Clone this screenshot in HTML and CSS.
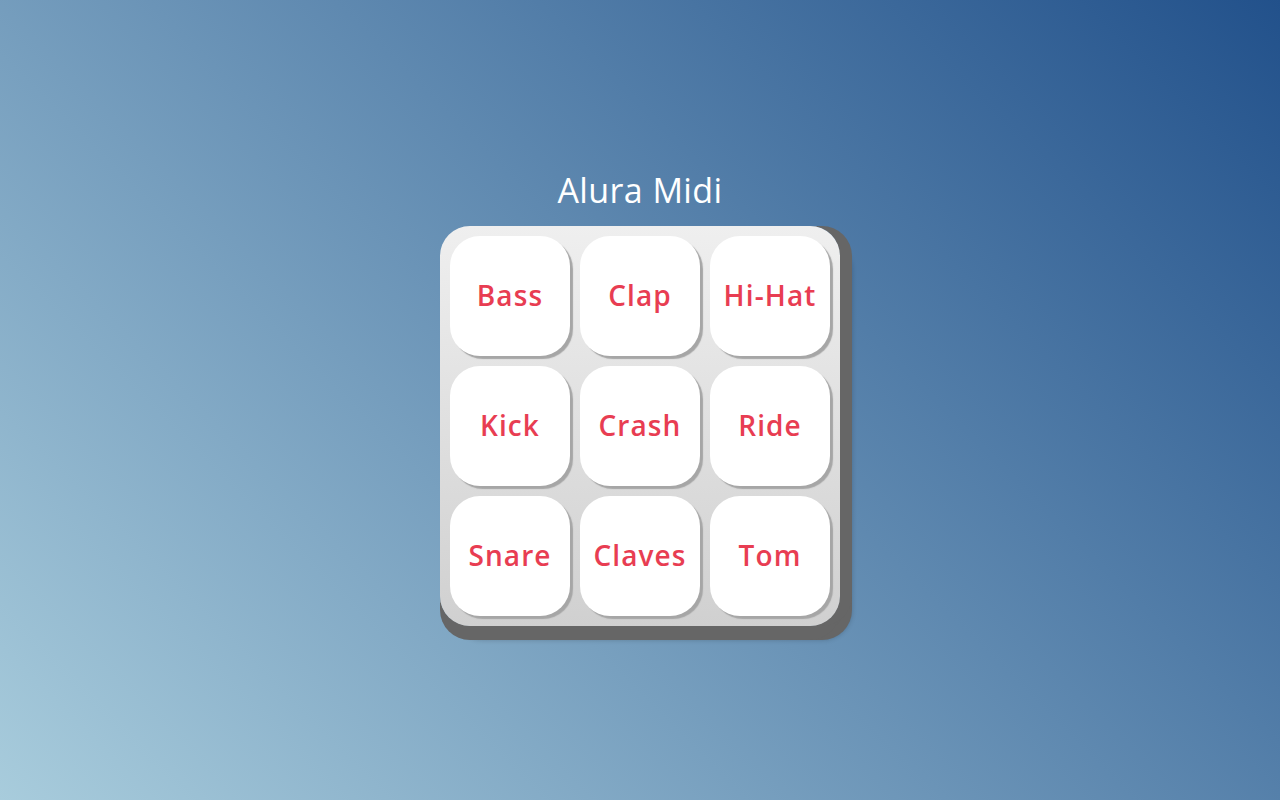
FILE: index.html
```html
<!DOCTYPE html>
<html lang="pt-br">
<head>
<meta charset="utf-8">
<title>Alura Midi</title>
<link rel="stylesheet" href="styles.css">
</head>
<body>
<main class="page">
  <h1 class="title">Alura Midi</h1>
  <section class="keypad">
    <button class="key">Bass</button>
    <button class="key">Clap</button>
    <button class="key">Hi-Hat</button>
    <button class="key">Kick</button>
    <button class="key">Crash</button>
    <button class="key">Ride</button>
    <button class="key">Snare</button>
    <button class="key">Claves</button>
    <button class="key">Tom</button>
  </section>
</main>
</body>
</html>
```
FILE: styles.css
```css
html, body {
  margin: 0;
  height: 100%;
}
body {
  background: linear-gradient(45deg, #a8ccdc, #22518b);
  font-family: "Open Sans", "Liberation Sans", sans-serif;
}
.page {
  height: 100%;
  display: flex;
  flex-direction: column;
  align-items: center;
  padding-top: 166px;
  box-sizing: border-box;
}
.title {
  margin: 0 0 12px;
  color: #fff;
  font-weight: 400;
  font-size: 34px;
  letter-spacing: 0.4px;
  line-height: 48px;
}
.keypad {
  width: 400px;
  height: 400px;
  box-sizing: border-box;
  padding: 10px;
  display: grid;
  grid-template-columns: repeat(3, 120px);
  grid-template-rows: repeat(3, 120px);
  gap: 10px;
  border-radius: 30px;
  background: linear-gradient(180deg, #efefef, #d0d0d0);
  box-shadow: 12px 0 0 #666, 0 14px 0 #666, 6px 7px 0 #666, 12px 14px 0 #666, 12px 14px 5px rgba(0,0,0,0.2);
}
.key {
  width: 120px;
  height: 120px;
  border: none;
  border-radius: 30px;
  background: #fff;
  box-shadow: 3px 3px 1px #a6a6a6;
  color: #e83d52;
  font-family: "Open Sans", "Liberation Sans", sans-serif;
  font-size: 28px;
  font-weight: 600;
  letter-spacing: 1.1px;
  padding: 0 0 2px;
}
```
